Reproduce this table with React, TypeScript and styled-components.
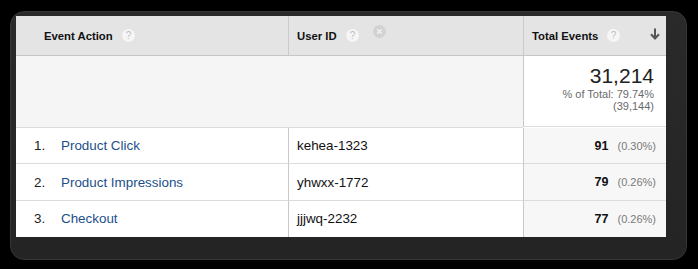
import styled, { createGlobalStyle } from "styled-components";

const GlobalStyle = createGlobalStyle`
  html, body {
    margin: 0;
    padding: 0;
    background: #000000;
  }
  body {
    font-family: "Liberation Sans", Arial, Helvetica, sans-serif;
  }
`;

interface Row {
  action: string;
  user: string;
  events: number;
  pct: string;
}

const rows: Row[] = [
  { action: "Product Click", user: "kehea-1323", events: 91, pct: "(0.30%)" },
  { action: "Product Impressions", user: "yhwxx-1772", events: 79, pct: "(0.26%)" },
  { action: "Checkout", user: "jjjwq-2232", events: 77, pct: "(0.26%)" },
];

function HelpIcon() {
  return (
    <svg width="13" height="13" viewBox="0 0 13 13">
      <circle cx="6.5" cy="6.5" r="6.5" fill="#f6f6f6" />
      <text
        x="6.5"
        y="10"
        textAnchor="middle"
        fontSize="10"
        fontFamily="Liberation Sans, Arial, sans-serif"
        fill="#bdbdbd"
      >
        ?
      </text>
    </svg>
  );
}

function RemoveIcon() {
  return (
    <svg width="13" height="13" viewBox="0 0 13 13">
      <circle cx="6.5" cy="6.5" r="6.5" fill="#d2d2d2" />
      <path d="M4.2 4.2 L8.8 8.8 M8.8 4.2 L4.2 8.8" stroke="#f0f0f0" strokeWidth="1.6" />
    </svg>
  );
}

function SortArrow() {
  return (
    <svg width="10" height="12" viewBox="0 0 10 12">
      <path d="M5 0.5 V10" stroke="#555" strokeWidth="2" />
      <path d="M1 6.2 L5 10.5 L9 6.2" stroke="#555" strokeWidth="2" fill="none" />
    </svg>
  );
}

export default function App() {
  return (
    <Page>
      <GlobalStyle />
      <Frame>
        <Table>
          <HeadCell>
            <HeadLabel>Event Action</HeadLabel>
            <HelpIcon />
          </HeadCell>
          <HeadCell $divider>
            <HeadLabel>User ID</HeadLabel>
            <HelpIcon />
            <RemoveGap>
              <RemoveIcon />
            </RemoveGap>
          </HeadCell>
          <HeadCell $divider>
            <HeadLabel>Total Events</HeadLabel>
            <HelpIcon />
            <SortSlot>
              <SortArrow />
            </SortSlot>
          </HeadCell>

          <SummaryBlank />
          <SummaryTotal>
            <BigNumber>31,214</BigNumber>
            <SubText>% of Total: 79.74%</SubText>
            <SubText>(39,144)</SubText>
          </SummaryTotal>

          {rows.map((r, i) => (
            <DataRow key={r.action} $last={i === rows.length - 1}>
              <ActionCell>
                <Index>{i + 1}.</Index>
                <Link>{r.action}</Link>
              </ActionCell>
              <UserCell>{r.user}</UserCell>
              <EventsCell>
                <Count>{r.events}</Count>
                <Pct>{r.pct}</Pct>
              </EventsCell>
            </DataRow>
          ))}
        </Table>
      </Frame>
    </Page>
  );
}

const Page = styled.div`
  width: 698px;
  height: 269px;
  padding: 11px 0 0 10px;
  box-sizing: border-box;
  background: #000000;
`;

const Frame = styled.div`
  width: 677px;
  box-sizing: border-box;
  padding: 4px 20px 22px 5px;
  background: linear-gradient(#2a2a2a, #242424);
  border: 1px solid #363636;
  border-radius: 14px;
`;

const Table = styled.div`
  display: grid;
  grid-template-columns: 272px 235px 143px;
  width: 650px;
  background: #ffffff;
  color: #222222;
`;

const HeadCell = styled.div<{ $divider?: boolean }>`
  height: 40px;
  box-sizing: border-box;
  display: flex;
  align-items: center;
  gap: 9px;
  padding: 0 6px 0 ${(p) => (p.$divider ? "8px" : "28px")};
  background: #e4e4e4;
  border-bottom: 1px solid #c6c6c6;
  border-left: ${(p) => (p.$divider ? "1px solid #cacaca" : "none")};
`;

const HeadLabel = styled.span`
  font-size: 11.3px;
  font-weight: bold;
  color: #111111;
`;

const RemoveGap = styled.span`
  display: flex;
  margin-left: 5px;
  margin-top: -8px;
`;

const SortSlot = styled.span`
  display: flex;
  margin-left: auto;
  margin-top: -3px;
`;

const SummaryBlank = styled.div`
  grid-column: span 2;
  height: 71px;
  background: #f5f5f5;
  border-bottom: 1px solid #dcdcdc;
`;

const SummaryTotal = styled.div`
  height: 71px;
  box-sizing: border-box;
  display: flex;
  flex-direction: column;
  align-items: flex-end;
  padding: 8px 12px 0 0;
  background: #ffffff;
  border-left: 1px solid #c8c8c8;
  border-bottom: 1px solid #dcdcdc;
`;

const BigNumber = styled.div`
  font-size: 21px;
  line-height: 24px;
  color: #222222;
`;

const SubText = styled.div`
  font-size: 11px;
  line-height: 12px;
  color: #6a6a6a;
`;

const DataRow = styled.div<{ $last?: boolean }>`
  display: contents;
  & > div {
    height: 36.4px;
    box-sizing: border-box;
    border-bottom: ${(p) => (p.$last ? "none" : "1px solid #dcdcdc")};
  }
`;

const ActionCell = styled.div`
  display: flex;
  align-items: center;
  padding-left: 18px;
  font-size: 13.4px;
`;

const Index = styled.span`
  width: 27px;
  color: #222222;
`;

const Link = styled.span`
  color: #1b4f8a;
`;

const UserCell = styled.div`
  display: flex;
  align-items: center;
  padding-left: 8px;
  font-size: 13.4px;
  color: #111111;
  border-left: 1px solid #c8c8c8;
`;

const EventsCell = styled.div`
  display: flex;
  align-items: center;
  justify-content: flex-end;
  gap: 9px;
  padding-right: 10px;
  background: #f7f7f7;
  border-left: 1px solid #c8c8c8;
`;

const Count = styled.span`
  font-size: 12.5px;
  font-weight: bold;
  color: #111111;
`;

const Pct = styled.span`
  font-size: 11px;
  color: #7a7a7a;
`;
